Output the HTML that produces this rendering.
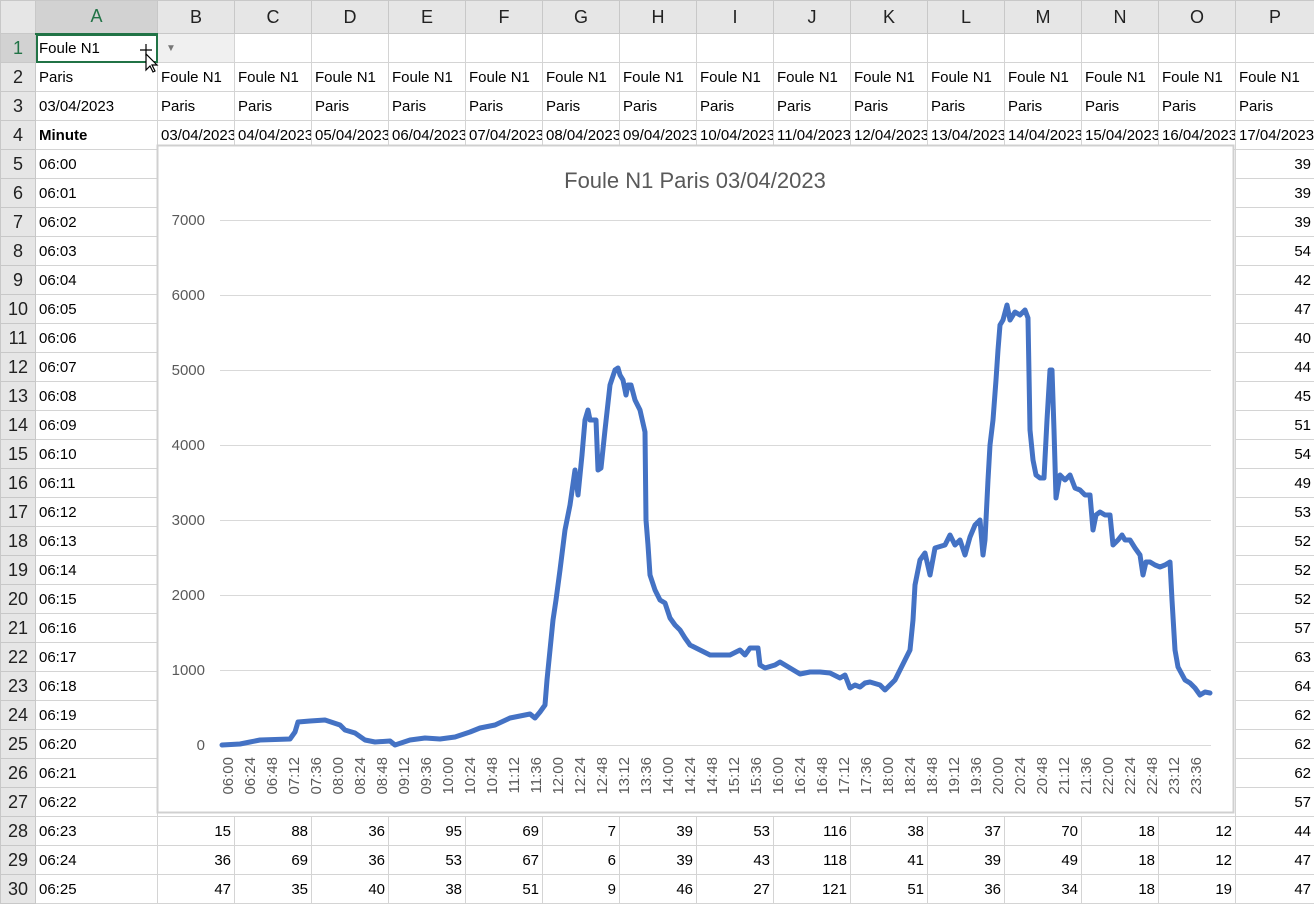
<!DOCTYPE html><html><head><meta charset="utf-8"><style>
body{margin:0;width:1314px;height:899px;overflow:hidden;background:#fff;font-family:"Liberation Sans",sans-serif;position:relative}
table{border-collapse:collapse;table-layout:fixed;position:absolute;left:0;top:0;width:1314px}
td{border:1px solid #d4d4d4;height:29px;padding:0 3px;font-size:15px;white-space:nowrap;overflow:hidden;color:#000;box-sizing:border-box}
tr.h td{height:33px;background:#e6e6e6;text-align:center;font-size:18px;color:#222;border-color:#c8c8c8}
td.r{background:#e6e6e6;text-align:center;font-size:18px;color:#222;padding:0;border-color:#c8c8c8}
td.n{text-align:right}
</style></head><body>
<table>
<colgroup><col style="width:35px"><col style="width:122px"><col span="14" style="width:77px"><col style="width:79px"></colgroup>
<tr class="h"><td></td><td style="background:#d2d2d2;color:#217346;border-bottom:2px solid #217346">A</td><td>B</td><td>C</td><td>D</td><td>E</td><td>F</td><td>G</td><td>H</td><td>I</td><td>J</td><td>K</td><td>L</td><td>M</td><td>N</td><td>O</td><td>P</td></tr>
<tr><td class="r" style="background:#d2d2d2;color:#217346">1</td><td style="outline:2px solid #217346;outline-offset:-2px">Foule N1</td><td style="background:#f0f0f0;color:#777;font-size:10px;padding-left:8px">▼</td><td></td><td></td><td></td><td></td><td></td><td></td><td></td><td></td><td></td><td></td><td></td><td></td><td></td><td></td></tr>
<tr><td class="r">2</td><td>Paris</td><td>Foule N1</td><td>Foule N1</td><td>Foule N1</td><td>Foule N1</td><td>Foule N1</td><td>Foule N1</td><td>Foule N1</td><td>Foule N1</td><td>Foule N1</td><td>Foule N1</td><td>Foule N1</td><td>Foule N1</td><td>Foule N1</td><td>Foule N1</td><td>Foule N1</td></tr>
<tr><td class="r">3</td><td>03/04/2023</td><td>Paris</td><td>Paris</td><td>Paris</td><td>Paris</td><td>Paris</td><td>Paris</td><td>Paris</td><td>Paris</td><td>Paris</td><td>Paris</td><td>Paris</td><td>Paris</td><td>Paris</td><td>Paris</td><td>Paris</td></tr>
<tr><td class="r">4</td><td><b>Minute</b></td><td>03/04/2023</td><td>04/04/2023</td><td>05/04/2023</td><td>06/04/2023</td><td>07/04/2023</td><td>08/04/2023</td><td>09/04/2023</td><td>10/04/2023</td><td>11/04/2023</td><td>12/04/2023</td><td>13/04/2023</td><td>14/04/2023</td><td>15/04/2023</td><td>16/04/2023</td><td>17/04/2023</td></tr>
<tr><td class="r">5</td><td>06:00</td><td colspan="14" rowspan="23"></td><td class="n">39</td></tr>
<tr><td class="r">6</td><td>06:01</td><td class="n">39</td></tr>
<tr><td class="r">7</td><td>06:02</td><td class="n">39</td></tr>
<tr><td class="r">8</td><td>06:03</td><td class="n">54</td></tr>
<tr><td class="r">9</td><td>06:04</td><td class="n">42</td></tr>
<tr><td class="r">10</td><td>06:05</td><td class="n">47</td></tr>
<tr><td class="r">11</td><td>06:06</td><td class="n">40</td></tr>
<tr><td class="r">12</td><td>06:07</td><td class="n">44</td></tr>
<tr><td class="r">13</td><td>06:08</td><td class="n">45</td></tr>
<tr><td class="r">14</td><td>06:09</td><td class="n">51</td></tr>
<tr><td class="r">15</td><td>06:10</td><td class="n">54</td></tr>
<tr><td class="r">16</td><td>06:11</td><td class="n">49</td></tr>
<tr><td class="r">17</td><td>06:12</td><td class="n">53</td></tr>
<tr><td class="r">18</td><td>06:13</td><td class="n">52</td></tr>
<tr><td class="r">19</td><td>06:14</td><td class="n">52</td></tr>
<tr><td class="r">20</td><td>06:15</td><td class="n">52</td></tr>
<tr><td class="r">21</td><td>06:16</td><td class="n">57</td></tr>
<tr><td class="r">22</td><td>06:17</td><td class="n">63</td></tr>
<tr><td class="r">23</td><td>06:18</td><td class="n">64</td></tr>
<tr><td class="r">24</td><td>06:19</td><td class="n">62</td></tr>
<tr><td class="r">25</td><td>06:20</td><td class="n">62</td></tr>
<tr><td class="r">26</td><td>06:21</td><td class="n">62</td></tr>
<tr><td class="r">27</td><td>06:22</td><td class="n">57</td></tr>
<tr><td class="r">28</td><td>06:23</td><td class="n">15</td><td class="n">88</td><td class="n">36</td><td class="n">95</td><td class="n">69</td><td class="n">7</td><td class="n">39</td><td class="n">53</td><td class="n">116</td><td class="n">38</td><td class="n">37</td><td class="n">70</td><td class="n">18</td><td class="n">12</td><td class="n">44</td></tr>
<tr><td class="r">29</td><td>06:24</td><td class="n">36</td><td class="n">69</td><td class="n">36</td><td class="n">53</td><td class="n">67</td><td class="n">6</td><td class="n">39</td><td class="n">43</td><td class="n">118</td><td class="n">41</td><td class="n">39</td><td class="n">49</td><td class="n">18</td><td class="n">12</td><td class="n">47</td></tr>
<tr><td class="r">30</td><td>06:25</td><td class="n">47</td><td class="n">35</td><td class="n">40</td><td class="n">38</td><td class="n">51</td><td class="n">9</td><td class="n">46</td><td class="n">27</td><td class="n">121</td><td class="n">51</td><td class="n">36</td><td class="n">34</td><td class="n">18</td><td class="n">19</td><td class="n">47</td></tr>
</table>
<svg style="position:absolute;left:0;top:0" width="1314" height="899" font-family="Liberation Sans, sans-serif">
<rect x="157.5" y="145.5" width="1076" height="667" fill="#fff" stroke="#d0d0d0" stroke-width="2"/>
<text x="695" y="188" text-anchor="middle" font-size="22" fill="#595959">Foule N1 Paris 03/04/2023</text>
<g stroke="#d9d9d9" stroke-width="1">
<line x1="220" x2="1211" y1="220.5" y2="220.5"/><line x1="220" x2="1211" y1="295.5" y2="295.5"/><line x1="220" x2="1211" y1="370.5" y2="370.5"/><line x1="220" x2="1211" y1="445.5" y2="445.5"/><line x1="220" x2="1211" y1="520.5" y2="520.5"/><line x1="220" x2="1211" y1="595.5" y2="595.5"/><line x1="220" x2="1211" y1="670.5" y2="670.5"/><line x1="220" x2="1211" y1="745.5" y2="745.5"/>
</g>
<g font-size="15" fill="#595959" text-anchor="end">
<text x="205" y="225">7000</text><text x="205" y="300">6000</text><text x="205" y="375">5000</text><text x="205" y="450">4000</text><text x="205" y="525">3000</text><text x="205" y="600">2000</text><text x="205" y="675">1000</text><text x="205" y="750">0</text>
</g>
<polyline fill="none" stroke="#4472c4" stroke-width="5" stroke-linejoin="round" stroke-linecap="round" points="222,745 240,744 250,742 260,740 290,739 295,732 298,722 310,721 325,720 340,725 345,730 355,733 365,740 375,742 390,741 395,745 410,740 425,738 440,739 455,737 470,732 480,728 495,725 510,718 520,716 530,714 535,718 540,712 545,705 547,680 550,650 553,620 556,600 560,570 565,530 570,505 575,470 578,495 582,455 585,420 588,410 590,420 593,420 596,420 598,470 601,468 605,430 610,385 615,370 618,368 620,375 623,380 626,395 628,385 631,385 635,400 640,410 645,432 646,520 648,545 650,575 655,590 660,600 665,603 670,618 675,625 680,630 685,638 690,645 700,650 710,655 720,655 730,655 740,650 745,655 750,648 758,648 760,665 765,668 775,665 780,662 790,668 800,674 810,672 820,672 830,673 840,678 845,675 850,688 855,685 860,687 865,683 870,682 880,685 885,690 890,685 895,680 900,670 905,660 910,650 913,620 915,585 918,570 920,560 925,553 930,575 935,548 945,545 950,535 955,545 960,540 965,555 970,537 975,525 980,520 983,555 985,540 988,480 990,445 993,420 996,380 998,350 1000,325 1003,320 1007,305 1010,320 1015,312 1020,315 1025,310 1028,318 1030,430 1033,460 1036,475 1040,478 1044,478 1047,420 1050,370 1052,370 1054,430 1056,498 1060,475 1065,480 1070,475 1075,488 1080,490 1085,495 1090,495 1093,530 1096,515 1100,512 1105,515 1110,515 1113,545 1118,540 1122,535 1125,540 1130,540 1135,548 1140,555 1143,575 1146,562 1150,562 1155,565 1160,567 1165,565 1170,562 1172,600 1175,650 1178,667 1185,680 1190,683 1195,688 1200,695 1205,692 1210,693"/>
<g font-size="15" fill="#595959" text-anchor="end">
<text transform="translate(233,757) rotate(-90)">06:00</text><text transform="translate(255,757) rotate(-90)">06:24</text><text transform="translate(277,757) rotate(-90)">06:48</text><text transform="translate(299,757) rotate(-90)">07:12</text><text transform="translate(321,757) rotate(-90)">07:36</text><text transform="translate(343,757) rotate(-90)">08:00</text><text transform="translate(365,757) rotate(-90)">08:24</text><text transform="translate(387,757) rotate(-90)">08:48</text><text transform="translate(409,757) rotate(-90)">09:12</text><text transform="translate(431,757) rotate(-90)">09:36</text><text transform="translate(453,757) rotate(-90)">10:00</text><text transform="translate(475,757) rotate(-90)">10:24</text><text transform="translate(497,757) rotate(-90)">10:48</text><text transform="translate(519,757) rotate(-90)">11:12</text><text transform="translate(541,757) rotate(-90)">11:36</text><text transform="translate(563,757) rotate(-90)">12:00</text><text transform="translate(585,757) rotate(-90)">12:24</text><text transform="translate(607,757) rotate(-90)">12:48</text><text transform="translate(629,757) rotate(-90)">13:12</text><text transform="translate(651,757) rotate(-90)">13:36</text><text transform="translate(673,757) rotate(-90)">14:00</text><text transform="translate(695,757) rotate(-90)">14:24</text><text transform="translate(717,757) rotate(-90)">14:48</text><text transform="translate(739,757) rotate(-90)">15:12</text><text transform="translate(761,757) rotate(-90)">15:36</text><text transform="translate(783,757) rotate(-90)">16:00</text><text transform="translate(805,757) rotate(-90)">16:24</text><text transform="translate(827,757) rotate(-90)">16:48</text><text transform="translate(849,757) rotate(-90)">17:12</text><text transform="translate(871,757) rotate(-90)">17:36</text><text transform="translate(893,757) rotate(-90)">18:00</text><text transform="translate(915,757) rotate(-90)">18:24</text><text transform="translate(937,757) rotate(-90)">18:48</text><text transform="translate(959,757) rotate(-90)">19:12</text><text transform="translate(981,757) rotate(-90)">19:36</text><text transform="translate(1003,757) rotate(-90)">20:00</text><text transform="translate(1025,757) rotate(-90)">20:24</text><text transform="translate(1047,757) rotate(-90)">20:48</text><text transform="translate(1069,757) rotate(-90)">21:12</text><text transform="translate(1091,757) rotate(-90)">21:36</text><text transform="translate(1113,757) rotate(-90)">22:00</text><text transform="translate(1135,757) rotate(-90)">22:24</text><text transform="translate(1157,757) rotate(-90)">22:48</text><text transform="translate(1179,757) rotate(-90)">23:12</text><text transform="translate(1201,757) rotate(-90)">23:36</text>
</g>
<g transform="translate(146,58)" stroke="#000" stroke-width="1.2" fill="#fff">
<path d="M-6,-8 L6,-8 M0,-14 L0,-2" fill="none"/>
<path d="M0,-4 L0,12 L4,8 L7,14 L9,13 L6,7 L11,7 Z"/>
</g>
</svg>
</body></html>
